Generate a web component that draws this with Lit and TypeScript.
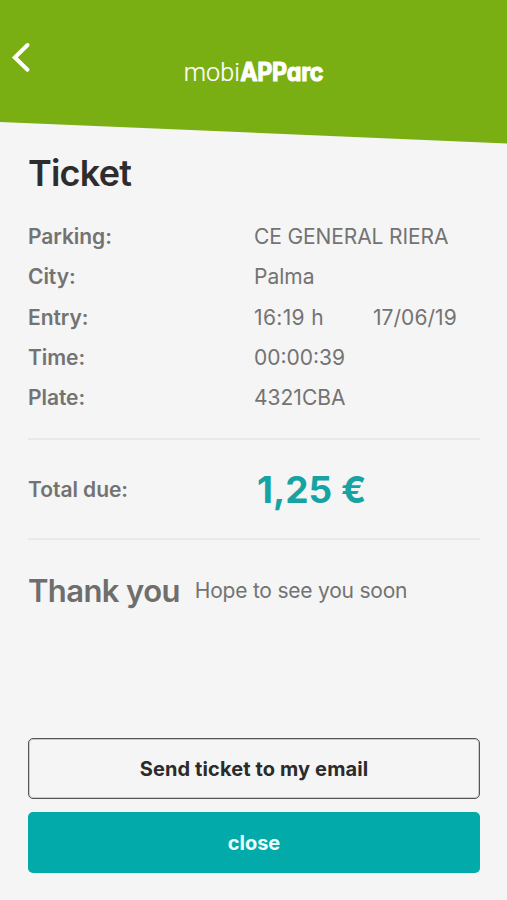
import { LitElement, html, css } from "lit";
import { customElement, property } from "lit/decorators.js";

@customElement("ticket-row")
class TicketRow extends LitElement {
  @property() label = "";

  static styles = css`
    :host {
      display: grid;
      grid-template-columns: 226px 1fr;
      align-items: center;
      height: 40.4px;
      font-size: 21px;
      line-height: 26px;
      white-space: nowrap;
    }
    .label {
      font-weight: 600;
      letter-spacing: -0.05px;
    }
  `;

  render() {
    return html`<span class="label">${this.label}</span><slot></slot>`;
  }
}

@customElement("app-root")
class AppRoot extends LitElement {
  static styles = css`
    :host {
      display: flex;
      flex-direction: column;
      height: 900px;
      box-sizing: border-box;
      background: #f5f5f5;
      color: #737373;
      font-family: Inter, "Liberation Sans", sans-serif;
      overflow: hidden;
    }
    header {
      flex: none;
      display: grid;
      grid-template-columns: 60px 1fr 60px;
      height: 144px;
      background: #7aaf14;
      clip-path: polygon(0 0, 100% 0, 100% 143.5px, 0 122px);
      color: #fff;
    }
    .back {
      width: 60px;
      height: 90px;
      padding: 0;
      border: 0;
      background: none;
    }
    .back svg {
      display: block;
    }
    .logo {
      justify-self: center;
      margin-top: 54px;
      overflow: visible;
      fill: #fff;
    }
    .thin {
      font-family: Roboto, sans-serif;
      font-weight: 300;
      font-size: 26.5px;
      stroke: #fff;
      stroke-width: 0.2px;
    }
    .thick {
      font-weight: 700;
      font-size: 25px;
      letter-spacing: -0.3px;
      font-feature-settings: "cv11";
      stroke: #fff;
      stroke-width: 1px;
      stroke-linejoin: round;
    }
    main {
      flex: 1;
      display: flex;
      flex-direction: column;
      padding: 7px 27px 27px 28px;
    }
    h1 {
      margin: 0;
      font-size: 36px;
      line-height: 44px;
      font-weight: 600;
      letter-spacing: -0.8px;
      color: #2d2d2d;
    }
    .details {
      padding: 21.6px 0 19.4px;
    }
    .name {
      letter-spacing: -0.12px;
    }
    .hour {
      letter-spacing: 0.35px;
    }
    .date {
      display: inline-block;
      margin-left: 49px;
      letter-spacing: 0.05px;
    }
    .due {
      border: solid #e8e9e9;
      border-width: 2px 0;
    }
    .due ticket-row {
      height: 96px;
      padding-top: 2px;
    }
    .price {
      padding-left: 3px;
      font-size: 37px;
      line-height: 46px;
      font-weight: 700;
      color: #16a3a1;
    }
    .thanks {
      display: flex;
      align-items: center;
      gap: 15px;
      margin: 0;
      padding-top: 31px;
      line-height: 40px;
      white-space: nowrap;
    }
    .thanks strong {
      font-size: 31px;
      font-weight: 600;
      letter-spacing: -0.6px;
      color: #6e6e6e;
    }
    .thanks span {
      font-size: 21px;
      letter-spacing: -0.22px;
    }
    .actions {
      display: grid;
      gap: 13px;
      margin-top: auto;
    }
    .actions button {
      height: 61px;
      padding: 0;
      border: 1px solid #555;
      border-radius: 5px;
      box-shadow: inset 0 0 0 1px rgba(80, 80, 80, 0.25);
      background: transparent;
      color: #2b2b2b;
      font: 700 20px/24px Inter, sans-serif;
      letter-spacing: 0.12px;
    }
    .actions .close {
      border: 0;
      box-shadow: none;
      background: #02aaa9;
      color: #edfffe;
      letter-spacing: 0;
    }
  `;

  render() {
    return html`
      <header>
        <button class="back" aria-label="Back">
          <svg width="60" height="90" viewBox="0 0 60 90" fill="none">
            <path d="M27.5 45 14.8 57.5 27.5 69.7" stroke="#fff" stroke-width="4" stroke-linecap="round" />
          </svg>
        </button>
        <svg class="logo" width="141" height="36" viewBox="0 0 141 36">
          <text class="thin" x="0.8" y="26.7" textLength="56" lengthAdjust="spacingAndGlyphs">mobi</text>
          <text class="thick" x="57.2" y="26.6" textLength="83" lengthAdjust="spacingAndGlyphs">APParc</text>
        </svg>
      </header>
      <main>
        <h1>Ticket</h1>
        <section class="details">
          <ticket-row label="Parking:"><span class="name">CE GENERAL RIERA</span></ticket-row>
          <ticket-row label="City:"><span>Palma</span></ticket-row>
          <ticket-row label="Entry:"><span class="hour">16:19 h<span class="date">17/06/19</span></span></ticket-row>
          <ticket-row label="Time:"><span>00:00:39</span></ticket-row>
          <ticket-row label="Plate:"><span>4321CBA</span></ticket-row>
        </section>
        <section class="due">
          <ticket-row label="Total due:"><span class="price">1,25 €</span></ticket-row>
        </section>
        <p class="thanks"><strong>Thank you</strong><span>Hope to see you soon</span></p>
        <div class="actions">
          <button>Send ticket to my email</button>
          <button class="close">close</button>
        </div>
      </main>
    `;
  }
}
